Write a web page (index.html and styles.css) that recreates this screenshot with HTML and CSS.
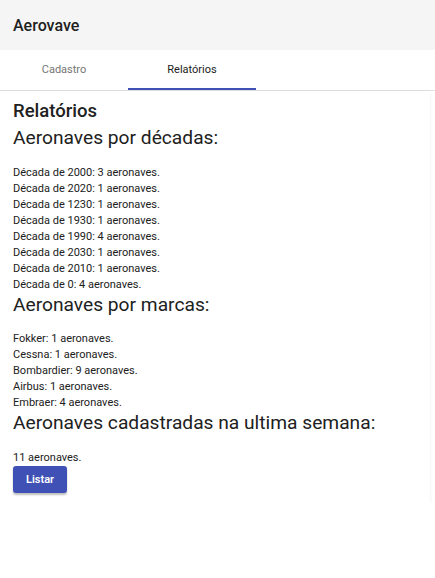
FILE: index.html
```html
<!DOCTYPE html>
<html lang="pt">
<head>
<meta charset="utf-8">
<link rel="stylesheet" href="styles.css">
</head>
<body>
<header class="toolbar">Aerovave</header>
<nav class="tabs">
  <div class="tab">Cadastro</div>
  <div class="tab active">Relatórios</div>
</nav>
<main class="card">
  <h1 class="title">Relatórios</h1>
  <h2 class="section first">Aeronaves por décadas:</h2>
  <ul class="list">
    <li>Década de 2000: 3 aeronaves.</li>
    <li>Década de 2020: 1 aeronaves.</li>
    <li>Década de 1230: 1 aeronaves.</li>
    <li>Década de 1930: 1 aeronaves.</li>
    <li>Década de 1990: 4 aeronaves.</li>
    <li>Década de 2030: 1 aeronaves.</li>
    <li>Década de 2010: 1 aeronaves.</li>
    <li>Década de 0: 4 aeronaves.</li>
  </ul>
  <h2 class="section">Aeronaves por marcas:</h2>
  <ul class="list">
    <li>Fokker: 1 aeronaves.</li>
    <li>Cessna: 1 aeronaves.</li>
    <li>Bombardier: 9 aeronaves.</li>
    <li>Airbus: 1 aeronaves.</li>
    <li>Embraer: 4 aeronaves.</li>
  </ul>
  <h2 class="section">Aeronaves cadastradas na ultima semana:</h2>
  <ul class="list">
    <li>11 aeronaves.</li>
  </ul>
  <button class="btn">Listar</button>
</main>
</body>
</html>
```
FILE: styles.css
```css
* { box-sizing: border-box; }
html, body {
  margin: 0;
  padding: 0;
  background: #fff;
  font-family: Roboto, "Noto Sans", Arial, sans-serif;
  color: #212121;
}
.toolbar {
  height: 50px;
  background: #f5f5f5;
  display: flex;
  align-items: center;
  padding: 0 13px;
  font-size: 16px;
  font-weight: 500;
  color: #212121;
}
.tabs {
  display: flex;
  height: 41px;
  border-bottom: 1px solid #e0e0e0;
}
.tab {
  width: 128px;
  display: flex;
  align-items: center;
  justify-content: center;
  font-size: 11px;
  color: #757575;
  border-bottom: 2px solid transparent;
  padding-top: 1px;
}
.tab.active {
  color: #212121;
  border-bottom-color: #3f51b5;
}
.card {
  padding: 8px 13px 10px;
  width: 430px;
  box-shadow: 0 1px 3px rgba(0,0,0,0.08);
}
.title {
  margin: 0;
  font-size: 18.5px;
  line-height: 24px;
  font-weight: 500;
}
.section {
  margin: 0;
  font-size: 19.2px;
  line-height: 24px;
  font-weight: 400;
}
.section.first {
  margin-top: 3px;
}
.list {
  list-style: none;
  margin: 0;
  padding: 14.5px 0 0;
  font-size: 11px;
  line-height: 16px;
}
.btn {
  display: block;
  margin-top: 0;
  height: 27px;
  width: 54px;
  border: 0;
  border-radius: 3px;
  background: #3f51b5;
  color: #fff;
  font-family: inherit;
  font-size: 11px;
  font-weight: 600;
  box-shadow: 0 2px 2px rgba(0,0,0,0.25);
}
```
